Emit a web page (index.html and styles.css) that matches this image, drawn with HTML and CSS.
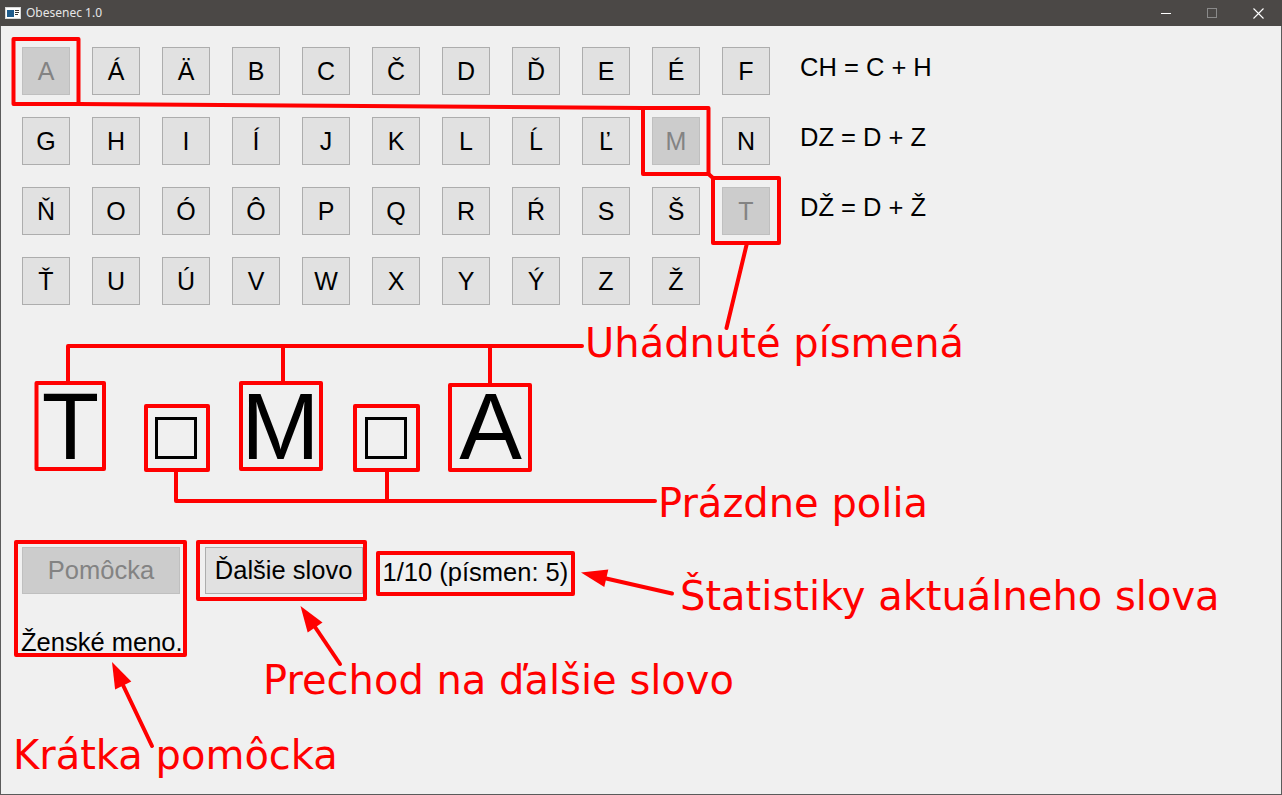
FILE: index.html
```html
<!DOCTYPE html>
<html lang="sk">
<head>
<meta charset="utf-8">
<title>Obesenec 1.0</title>
<link rel="stylesheet" href="styles.css">
</head>
<body>
<div class="window">
  <div class="titlebar">
    <svg class="app-icon" width="16" height="12" viewBox="0 0 16 12">
      <rect x="0.5" y="0.5" width="15" height="11" fill="#ffffff" stroke="#d8d8d8"/>
      <rect x="2" y="3" width="7" height="7" fill="#1f5c8c"/>
      <rect x="10" y="3" width="4" height="1" fill="#3a3a3a"/>
      <rect x="10" y="5" width="4" height="1" fill="#3a3a3a"/>
      <rect x="10" y="7" width="3" height="1" fill="#3a3a3a"/>
    </svg>
    <span class="title">Obesenec 1.0</span>
    <div class="controls">
      <span class="ctrl"><svg width="10" height="10" viewBox="0 0 10 10"><path d="M0 5.5H10" stroke="#ffffff" stroke-width="1"/></svg></span>
      <span class="ctrl"><svg width="10" height="10" viewBox="0 0 10 10"><rect x="0.5" y="0.5" width="9" height="9" fill="none" stroke="#8a8a8a" stroke-width="1"/></svg></span>
      <span class="ctrl"><svg width="11" height="11" viewBox="0 0 11 11"><path d="M0.5 0.5L10.5 10.5M10.5 0.5L0.5 10.5" stroke="#ffffff" stroke-width="1.1"/></svg></span>
    </div>
  </div>

  <div class="client">
    <div class="top">
      <div class="keys">
        <button class="key" disabled>A</button>
        <button class="key">Á</button>
        <button class="key">Ä</button>
        <button class="key">B</button>
        <button class="key">C</button>
        <button class="key">Č</button>
        <button class="key">D</button>
        <button class="key">Ď</button>
        <button class="key">E</button>
        <button class="key">É</button>
        <button class="key">F</button>

        <button class="key">G</button>
        <button class="key">H</button>
        <button class="key">I</button>
        <button class="key">Í</button>
        <button class="key">J</button>
        <button class="key">K</button>
        <button class="key">L</button>
        <button class="key">Ĺ</button>
        <button class="key">Ľ</button>
        <button class="key" disabled>M</button>
        <button class="key">N</button>

        <button class="key">Ň</button>
        <button class="key">O</button>
        <button class="key">Ó</button>
        <button class="key">Ô</button>
        <button class="key">P</button>
        <button class="key">Q</button>
        <button class="key">R</button>
        <button class="key">Ŕ</button>
        <button class="key">S</button>
        <button class="key">Š</button>
        <button class="key" disabled>T</button>

        <button class="key">Ť</button>
        <button class="key">U</button>
        <button class="key">Ú</button>
        <button class="key">V</button>
        <button class="key">W</button>
        <button class="key">X</button>
        <button class="key">Y</button>
        <button class="key">Ý</button>
        <button class="key">Z</button>
        <button class="key">Ž</button>
      </div>
      <div class="digraphs">
        <div class="digraph">CH = C + H</div>
        <div class="digraph">DZ = D + Z</div>
        <div class="digraph">DŽ = D + Ž</div>
      </div>
    </div>

    <div class="word">
      <div class="tile">T</div>
      <div class="tile"><span class="blank"></span></div>
      <div class="tile">M</div>
      <div class="tile"><span class="blank"></span></div>
      <div class="tile">A</div>
    </div>

    <div class="bottom">
      <div class="hint-col">
        <button class="bigbtn" disabled>Pomôcka</button>
        <div class="hint">Ženské meno.</div>
      </div>
      <button class="bigbtn">Ďalšie slovo</button>
      <div class="stats">1/10 (písmen: 5)</div>
    </div>
  </div>

  <svg class="annot" width="1282" height="795" viewBox="0 0 1282 795">
    <g fill="none" stroke="#ff0000" stroke-width="4" stroke-linejoin="round" stroke-linecap="round">
      <rect x="13.5" y="39" width="65" height="65"/>
      <path d="M78.5 104L643 108"/>
      <rect x="643" y="108" width="65.5" height="66"/>
      <path d="M708.5 174L713 178"/>
      <rect x="713" y="178" width="66" height="65"/>
      <path d="M747 243L726.5 328"/>

      <path d="M68 383V346H582M283 346V383M490 346V385"/>
      <rect x="36.5" y="383" width="67.5" height="86"/>
      <rect x="146" y="406" width="62" height="64"/>
      <rect x="241" y="383" width="80" height="86"/>
      <rect x="355" y="406" width="63" height="64"/>
      <rect x="450" y="385" width="80" height="85"/>
      <path d="M176 470V501H655M387 470V501"/>

      <rect x="16" y="542" width="169" height="113"/>
      <rect x="198" y="542" width="167" height="57"/>
      <rect x="378" y="553" width="195" height="41"/>

      <path d="M672 593.5L604 578"/>
      <path d="M340 664L313 624"/>
      <path d="M152 746L122 683"/>
    </g>
    <g fill="#ff0000">
      <polygon points="581,572.5 608.3,569.6 604.3,587.1"/>
      <polygon points="300.5,606 322.5,622.4 307.7,632.6"/>
      <polygon points="112,662 131.3,681.6 115.1,689.4"/>
    </g>
  </svg>

  <div class="note note-uhadnute">Uhádnuté písmená</div>
  <div class="note note-prazdne">Prázdne polia</div>
  <div class="note note-stat">Štatistiky aktuálneho slova</div>
  <div class="note note-prechod">Prechod na ďalšie slovo</div>
  <div class="note note-kratka">Krátka pomôcka</div>
</div>
</body>
</html>
```

FILE: styles.css
```css
html, body {
  margin: 0;
  padding: 0;
  background: #f0f0f0;
}

.window {
  position: relative;
  width: 1282px;
  height: 795px;
  box-sizing: border-box;
  background: #f0f0f0;
  box-shadow: inset 1px 0 0 #5b5b5b, inset -1px 0 0 #5b5b5b, inset 0 -1px 0 #5b5b5b;
  overflow: hidden;
  font-family: "Liberation Sans", Arial, sans-serif;
}

/* ---------- title bar ---------- */
.titlebar {
  height: 26px;
  background: #4b4846;
  display: flex;
  align-items: center;
}

.app-icon {
  margin-left: 5px;
  flex: none;
}

.title {
  margin-left: 5px;
  font-family: "Noto Sans", "Open Sans", sans-serif;
  font-size: 12px;
  color: #e6e6e6;
  line-height: 26px;
}

.controls {
  margin-left: auto;
  display: flex;
  height: 26px;
  margin-right: 1px;
}

.ctrl {
  width: 46px;
  height: 26px;
  display: flex;
  align-items: center;
  justify-content: center;
}

/* ---------- client ---------- */
.client {
  padding: 21px 0 0 22px;
}

.top {
  display: flex;
  align-items: flex-start;
}

.keys {
  display: grid;
  grid-template-columns: repeat(11, 48px);
  grid-auto-rows: 48px;
  gap: 22px;
}

.key {
  box-sizing: border-box;
  width: 48px;
  height: 48px;
  margin: 0;
  padding: 0;
  border: 1px solid #adadad;
  border-radius: 0;
  background: #e1e1e1;
  color: #000;
  font-family: "Liberation Sans", Arial, sans-serif;
  font-size: 25px;
  line-height: 46px;
  text-align: center;
}

.key:disabled {
  background: #cccccc;
  border-color: #bfbfbf;
  color: #838383;
}

.digraphs {
  margin-left: 30px;
  display: flex;
  flex-direction: column;
  gap: 22px;
}

.digraph {
  height: 48px;
  font-size: 25.5px;
  line-height: 40px;
  color: #000;
  white-space: nowrap;
}

/* ---------- word ---------- */
.word {
  margin-top: 75px;
  margin-left: -4px;
  display: grid;
  grid-template-columns: repeat(5, 105px);
  align-items: end;
  height: 94px;
}

.tile {
  font-size: 94px;
  line-height: 94px;
  height: 94px;
  text-align: center;
  color: #000;
  display: flex;
  justify-content: center;
  align-items: flex-end;
}

.blank {
  display: block;
  box-sizing: border-box;
  width: 42px;
  height: 42px;
  border: 3px solid #000;
  margin-bottom: 15px;
}

/* ---------- bottom ---------- */
.bottom {
  margin-top: 73px;
  display: flex;
  align-items: flex-start;
  gap: 22px;
}

.hint-col {
  display: flex;
  flex-direction: column;
}

.bigbtn {
  box-sizing: border-box;
  width: 158px;
  height: 47px;
  margin: 0;
  padding: 0;
  border: 1px solid #adadad;
  border-radius: 0;
  background: #e1e1e1;
  color: #000;
  font-family: "Liberation Sans", Arial, sans-serif;
  font-size: 25.5px;
  line-height: 45px;
  text-align: center;
  white-space: nowrap;
}

.bigbtn:disabled {
  background: #cccccc;
  border-color: #bfbfbf;
  color: #838383;
}

.hint {
  margin-top: 33px;
  margin-left: -1px;
  font-size: 25.5px;
  line-height: 30px;
  color: #000;
  white-space: nowrap;
}

.stats {
  margin-top: 10px;
  margin-left: -2px;
  font-size: 25.5px;
  line-height: 30px;
  color: #000;
  white-space: nowrap;
}

/* ---------- annotations (overlay) ---------- */
.annot {
  position: absolute;
  left: 0;
  top: 0;
  pointer-events: none;
}

.note {
  position: absolute;
  font-family: "DejaVu Sans", sans-serif;
  font-size: 40px;
  line-height: 40px;
  color: #ff0000;
  white-space: nowrap;
}

.note-uhadnute { left: 585px; top: 323px; }
.note-prazdne  { left: 658px; top: 483px; }
.note-stat     { left: 680px; top: 576px; }
.note-prechod  { left: 263px; top: 660px; }
.note-kratka   { left: 13px;  top: 735px; }
```
